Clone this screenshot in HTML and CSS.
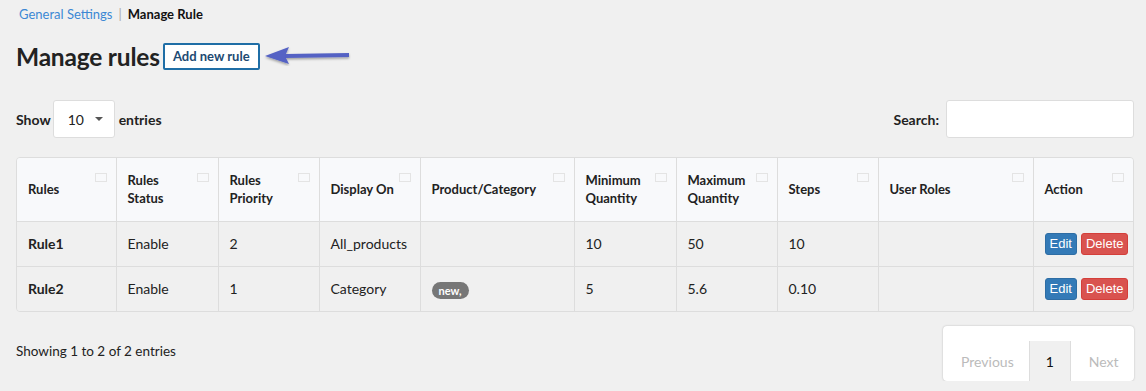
FILE: index.html
```html
<!DOCTYPE html>
<html lang="en">
<head>
<meta charset="UTF-8">
<title>Manage rules</title>
<link rel="stylesheet" href="styles.css">
</head>
<body>

<div class="page">
  <!-- breadcrumb -->
  <div class="crumbs">
    <a href="#">General Settings</a><span class="sep">|</span><strong>Manage Rule</strong>
  </div>

  <!-- title -->
  <div class="title-row">
    <h1>Manage rules</h1>
    <button class="btn-add">Add new rule</button>
    <svg class="pointer" width="92" height="22" viewBox="0 0 92 22">
      <defs>
        <filter id="sh" x="-10%" y="-50%" width="120%" height="200%">
          <feDropShadow dx="0" dy="1.5" stdDeviation="1" flood-color="#000" flood-opacity="0.35"/>
        </filter>
      </defs>
      <g filter="url(#sh)">
        <path d="M22 10 L86 9 L86 13 L22 14 Z" fill="#5462c4"/>
        <path d="M2 12 L26 3 L22 12 L26 20 Z" fill="#5462c4"/>
      </g>
    </svg>
  </div>

  <!-- controls -->
  <div class="controls">
    <label class="length">Show
      <span class="select">10 <i class="caret"></i></span>
      entries</label>
    <label class="search">Search: <input type="text"></label>
  </div>

  <div class="table-box">
    <table>
      <thead>
        <tr>
          <th class="c1">Rules<i class="sort"></i></th>
          <th class="c2">Rules<br>Status<i class="sort"></i></th>
          <th class="c3">Rules<br>Priority<i class="sort"></i></th>
          <th class="c4">Display On<i class="sort"></i></th>
          <th class="c5">Product/Category<i class="sort"></i></th>
          <th class="c6">Minimum<br>Quantity<i class="sort"></i></th>
          <th class="c7">Maximum<br>Quantity<i class="sort"></i></th>
          <th class="c8">Steps<i class="sort"></i></th>
          <th class="c9">User Roles<i class="sort"></i></th>
          <th class="c10">Action<i class="sort"></i></th>
        </tr>
      </thead>
      <tbody>
        <tr>
          <td><b>Rule1</b></td>
          <td>Enable</td>
          <td>2</td>
          <td>All_products</td>
          <td></td>
          <td>10</td>
          <td>50</td>
          <td>10</td>
          <td></td>
          <td class="actions"><button class="btn-xs edit">Edit</button><button class="btn-xs del">Delete</button></td>
        </tr>
        <tr>
          <td><b>Rule2</b></td>
          <td>Enable</td>
          <td>1</td>
          <td>Category</td>
          <td><span class="badge">new,</span></td>
          <td>5</td>
          <td>5.6</td>
          <td>0.10</td>
          <td></td>
          <td class="actions"><button class="btn-xs edit">Edit</button><button class="btn-xs del">Delete</button></td>
        </tr>
      </tbody>
    </table>
  </div>

  <div class="footer">
    <div class="info">Showing 1 to 2 of 2 entries</div>
    <div class="pager">
      <span class="pg off">Previous</span>
      <span class="pg cur">1</span>
      <span class="pg off">Next</span>
    </div>
  </div>
</div>

</body>
</html>
```

FILE: styles.css
```css
body {
  margin: 0;
  background-color: #f0f0f0;
  font-family: 'Lato', 'Liberation Sans', sans-serif;
  font-size: 13px;
  color: #222;
}
.page {
  padding: 5px 12px 0 16px;
}
.crumbs {
  padding-left: 3px;
  line-height: 18px;
}
.crumbs a {
  color: #3c88d4;
  text-decoration: none;
}
.crumbs .sep {
  color: #aaa;
  margin: 0 6px;
}
.crumbs strong {
  color: #111;
}
.title-row {
  display: flex;
  align-items: center;
  margin-top: 19px;
  height: 28px;
}
h1 {
  font-size: 24.5px;
  font-weight: bold;
  margin: 0 3px 0 0;
  color: #222;
  letter-spacing: -0.2px;
}
.btn-add {
  font-family: 'Lato', sans-serif;
  font-weight: bold;
  font-size: 13px;
  color: #1d4a72;
  background: #fff;
  border: 2px solid #1f6ea6;
  border-radius: 2px;
  height: 27px;
  width: 97px;
  padding: 0;
  cursor: pointer;
}
.pointer {
  margin-left: 3px;
  margin-top: -2px;
}
.controls {
  display: flex;
  justify-content: space-between;
  align-items: center;
  margin-top: 30px;
  height: 38px;
}
.controls label {
  font-weight: bold;
  font-size: 14px;
  display: flex;
  align-items: center;
}
.select {
  display: inline-flex;
  align-items: center;
  box-sizing: border-box;
  width: 62px;
  height: 38px;
  margin: 0 4px 0 2px;
  padding-left: 14px;
  background: #fff;
  border: 1px solid #ddd;
  border-radius: 3px;
  font-weight: normal;
  font-size: 14px;
}
.caret {
  display: inline-block;
  margin-left: 11px;
  border-left: 4px solid transparent;
  border-right: 4px solid transparent;
  border-top: 4px solid #555;
}
.search input {
  box-sizing: border-box;
  width: 188px;
  height: 38px;
  margin-left: 7px;
  border: 1px solid #ddd;
  border-radius: 3px;
  background: #fff;
}
.table-box {
  margin-top: 19px;
  border: 1px solid #ddd;
  border-radius: 4px;
  overflow: hidden;
}
table {
  width: 100%;
  border-collapse: collapse;
  table-layout: fixed;
}
th, td {
  box-sizing: border-box;
  text-align: left;
  vertical-align: middle;
  padding: 0 11px;
  border-left: 1px solid #ddd;
}
th:first-child, td:first-child {
  border-left: none;
}
th {
  position: relative;
  height: 63px;
  background: #f8f9fb;
  font-weight: bold;
  line-height: 18px;
  border-bottom: 1px solid #ddd;
}
td {
  height: 45px;
  font-size: 14px;
  background: #f0f0f0;
  border-top: 1px solid #ddd;
}
tbody tr:first-child td {
  border-top: none;
}
.sort {
  position: absolute;
  top: 15px;
  right: 9px;
  width: 10px;
  height: 7px;
  border: 1px solid #e4e4e4;
}
.c1 { width: 99px; }
.c2 { width: 102px; }
.c3 { width: 101px; }
.c4 { width: 101px; }
.c5 { width: 154px; }
.c6 { width: 102px; }
.c7 { width: 101px; }
.c8 { width: 101px; }
.c9 { width: 155px; }
.actions {
  padding: 0 0 0 11px;
  white-space: nowrap;
}
.btn-xs {
  font-family: 'Liberation Sans', Arial, sans-serif;
  font-size: 13px;
  color: #fff;
  border: 1px solid transparent;
  border-radius: 3px;
  height: 22px;
  padding: 0 4px;
  margin-right: 4px;
  cursor: pointer;
}
.edit {
  background: #337ab7;
  border-color: #2e6da4;
}
.del {
  background: #d9534f;
  border-color: #d43f3a;
}
.badge {
  display: inline-block;
  background: #777;
  color: #fff;
  font-weight: bold;
  font-size: 11px;
  line-height: 17px;
  padding: 0 7px;
  border-radius: 9px;
  margin-top: 3px;
}
.footer {
  display: flex;
  justify-content: space-between;
  align-items: flex-start;
  margin-top: 14px;
}
.info {
  margin-top: 17px;
  font-size: 13.5px;
}
.pager {
  display: flex;
  align-items: flex-end;
  box-sizing: border-box;
  height: 55px;
  width: 191px;
  background: #fff;
  border-radius: 4px;
  box-shadow: 0 0 2px rgba(0, 0, 0, 0.25);
}
.pg {
  height: 40px;
  line-height: 42px;
  font-size: 14px;
}
.pg.off {
  color: #bbb;
  padding: 0 15px 0 18px;
}
.pg.cur {
  width: 42px;
  text-align: center;
  background: #f0f0f0;
  border-left: 1px solid #ddd;
  border-right: 1px solid #ddd;
  box-sizing: border-box;
  color: #111;
}
```
